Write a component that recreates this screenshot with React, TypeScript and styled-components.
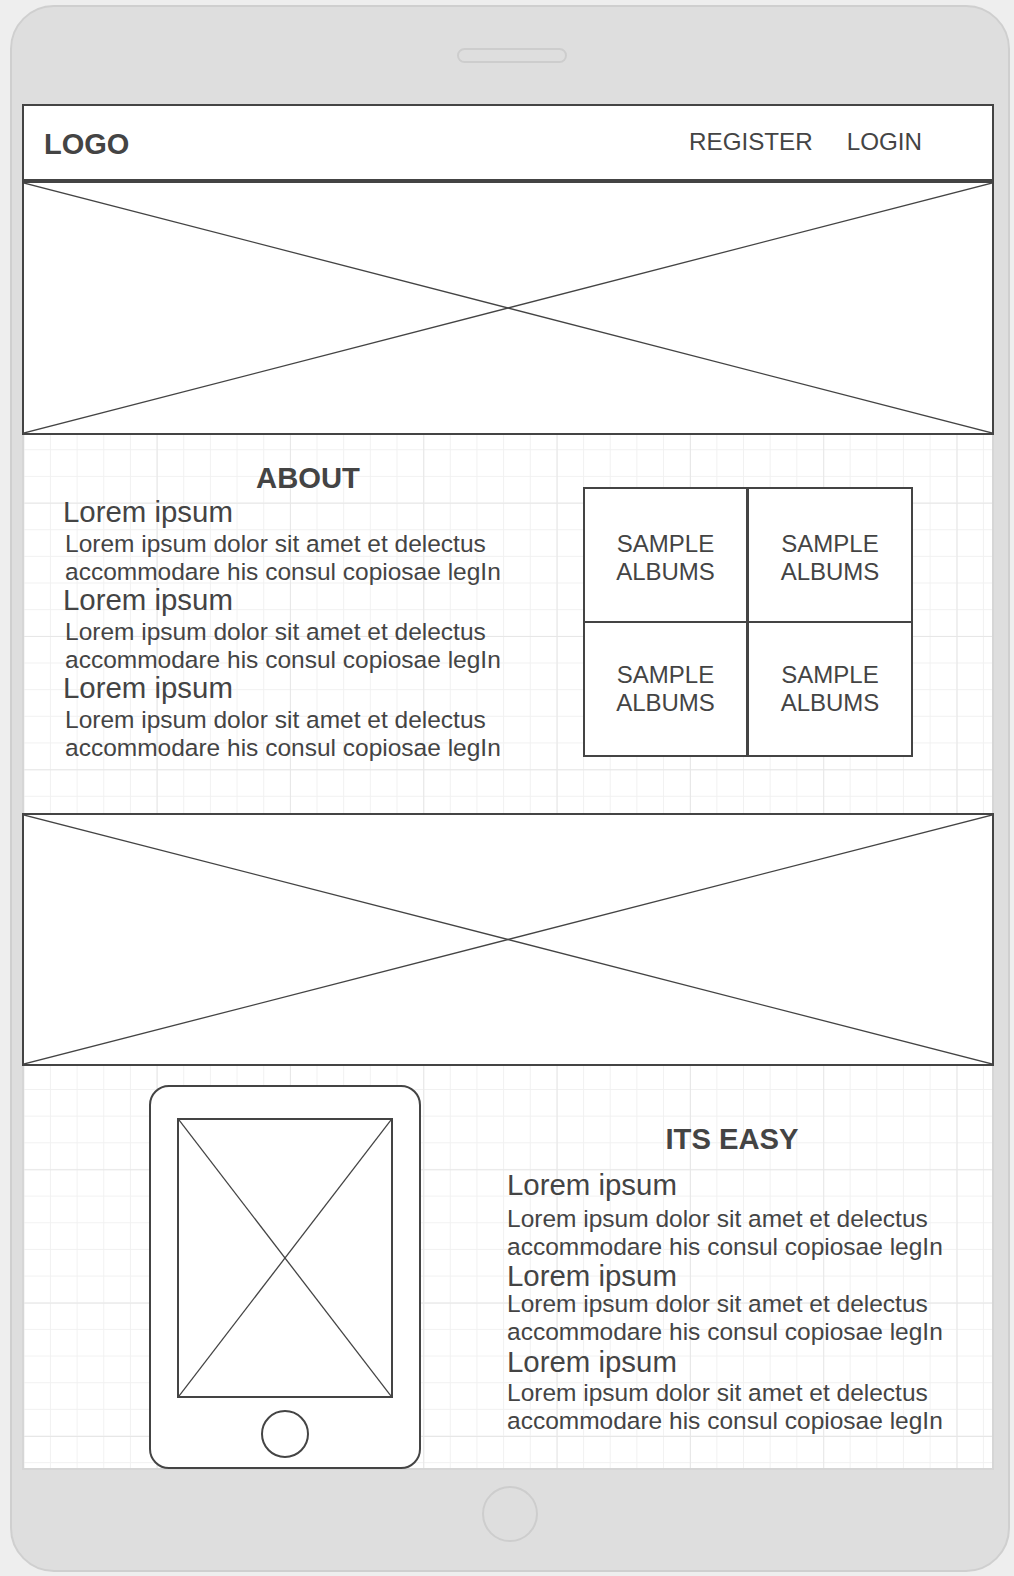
import styled, { createGlobalStyle } from 'styled-components';

const GlobalStyle = createGlobalStyle`
  html, body {
    margin: 0;
    padding: 0;
    background: #eeeeee;
  }

  body {
    font-family: "Liberation Sans", Arial, sans-serif;
    color: #444;
  }
`;

type Block = { gap: number };

const aboutBlocks: Block[] = [{ gap: 4 }, { gap: 4 }, { gap: 4 }];
const easyBlocks: Block[] = [{ gap: 6 }, { gap: 0 }, { gap: 3 }];

function Cross() {
  return (
    <CrossSvg viewBox="0 0 100 100" preserveAspectRatio="none">
      <line x1="0" y1="0" x2="100" y2="100" vectorEffect="non-scaling-stroke" />
      <line x1="0" y1="100" x2="100" y2="0" vectorEffect="non-scaling-stroke" />
    </CrossSvg>
  );
}

function TextBlocks({ blocks, indent, spacing }: { blocks: Block[]; indent: number; spacing: number }) {
  return (
    <>
      {blocks.map((block, i) => (
        <TextBlock key={i} $spacing={i === 0 ? 0 : spacing}>
          <BlockHeading>Lorem ipsum</BlockHeading>
          <BlockBody $gap={block.gap} $indent={indent}>
            Lorem ipsum dolor sit amet et delectus
            <br />
            accommodare his consul copiosae legIn
          </BlockBody>
        </TextBlock>
      ))}
    </>
  );
}

export default function App() {
  return (
    <>
      <GlobalStyle />
      <Device>
        <DeviceTop>
          <Speaker />
        </DeviceTop>
        <Screen>
          <NavBar>
            <Logo>LOGO</Logo>
            <NavLinks>
              <NavLink>REGISTER</NavLink>
              <NavLink>LOGIN</NavLink>
            </NavLinks>
          </NavBar>
          <Placeholder $height={254}>
            <Cross />
          </Placeholder>

          <AboutSection>
            <TextColumn>
              <SectionTitle $spacing={0}>ABOUT</SectionTitle>
              <TextBlocks blocks={aboutBlocks} indent={2} spacing={0} />
            </TextColumn>
            <AlbumGrid>
              {[0, 1, 2, 3].map((n) => (
                <AlbumCell key={n}>
                  SAMPLE
                  <br />
                  ALBUMS
                </AlbumCell>
              ))}
            </AlbumGrid>
          </AboutSection>

          <Placeholder $height={253}>
            <Cross />
          </Placeholder>

          <EasySection>
            <TabletFrame>
              <TabletScreen>
                <Cross />
              </TabletScreen>
              <TabletButton />
            </TabletFrame>
            <EasyColumn>
              <SectionTitle $spacing={12}>ITS EASY</SectionTitle>
              <TextBlocks blocks={easyBlocks} indent={0} spacing={1.5} />
            </EasyColumn>
          </EasySection>
        </Screen>
        <DeviceBottom>
          <HomeButton />
        </DeviceBottom>
      </Device>
    </>
  );
}

const Device = styled.div`
  width: 1000px;
  height: 1567px;
  margin: 5px 0 0 10px;
  box-sizing: border-box;
  display: flex;
  flex-direction: column;
  background-color: #dedede;
  border: 2px solid #cfcfcf;
  border-radius: 44px;
  overflow: hidden;
`;

const DeviceTop = styled.div`
  height: 97px;
  flex-shrink: 0;
  display: flex;
  justify-content: center;
  padding-top: 41px;
  padding-left: 4px;
  box-sizing: border-box;
`;

const Speaker = styled.div`
  width: 110px;
  height: 15px;
  box-sizing: border-box;
  border: 2px solid #cdcdcd;
  border-radius: 8px;
`;

const Screen = styled.div`
  width: 972px;
  height: 1366px;
  margin-left: 10px;
  flex-shrink: 0;
  display: flex;
  flex-direction: column;
  background-color: #fff;
  background-image:
    linear-gradient(to right, #e7e7e7 1px, transparent 1px),
    linear-gradient(to bottom, #e7e7e7 1px, transparent 1px),
    linear-gradient(to right, #f1f1f1 1px, transparent 1px),
    linear-gradient(to bottom, #f1f1f1 1px, transparent 1px);
  background-size:
    133.33px 133.33px,
    133.33px 133.33px,
    26.667px 26.667px,
    26.667px 26.667px;
  background-position: 1.3px -1.3px;
  box-shadow: inset 0 0 0 2px #d6d6d6;
`;

const NavBar = styled.div`
  height: 77px;
  flex-shrink: 0;
  box-sizing: border-box;
  display: flex;
  align-items: center;
  justify-content: space-between;
  padding: 2px 70px 0 20px;
  background-color: #fff;
  border: 2px solid #444;
`;

const Logo = styled.div`
  font-size: 29px;
  font-weight: bold;
  line-height: 34px;
`;

const NavLinks = styled.div`
  display: flex;
  gap: 34px;
  margin-top: -3px;
`;

const NavLink = styled.span`
  font-size: 24.2px;
  line-height: 28px;
`;

const Placeholder = styled.div<{ $height: number }>`
  height: ${(p) => p.$height}px;
  flex-shrink: 0;
  box-sizing: border-box;
  background-color: #fff;
  border: 2px solid #444;
`;

const CrossSvg = styled.svg`
  display: block;
  width: 100%;
  height: 100%;

  line {
    stroke: #444;
    stroke-width: 1.3;
  }
`;

const AboutSection = styled.div`
  height: 378px;
  flex-shrink: 0;
  box-sizing: border-box;
  display: flex;
  align-items: flex-start;
  gap: 30px;
  padding: 23px 0 0 41px;
`;

const TextColumn = styled.div`
  width: 490px;
  display: flex;
  flex-direction: column;
`;

const SectionTitle = styled.div<{ $spacing: number }>`
  font-size: 29.2px;
  font-weight: bold;
  line-height: 40px;
  text-align: center;
  margin-bottom: ${(p) => p.$spacing}px;
`;

const TextBlock = styled.div<{ $spacing: number }>`
  margin-top: ${(p) => p.$spacing}px;
`;

const BlockHeading = styled.div`
  font-size: 29.4px;
  line-height: 28px;
`;

const BlockBody = styled.div<{ $gap: number; $indent: number }>`
  font-size: 24.5px;
  line-height: 28px;
  margin-top: ${(p) => p.$gap}px;
  padding-left: ${(p) => p.$indent}px;
  white-space: nowrap;
`;

const AlbumGrid = styled.div`
  display: grid;
  grid-template-columns: 165px 165px;
  margin-top: 29px;
`;

const AlbumCell = styled.div`
  height: 136px;
  box-sizing: border-box;
  display: flex;
  align-items: center;
  justify-content: center;
  text-align: center;
  font-size: 24px;
  line-height: 28px;
  background-color: #fff;
  border: 2px solid #444;

  &:nth-child(-n + 2) {
    padding-top: 6px;
  }

  &:nth-child(even) {
    margin-left: -1px;
  }

  &:nth-child(n + 3) {
    margin-top: -2px;
  }
`;

const EasySection = styled.div`
  flex: 1;
  box-sizing: border-box;
  display: flex;
  align-items: flex-start;
  gap: 86px;
  padding: 19px 0 0 127px;
`;

const TabletFrame = styled.div`
  width: 272px;
  height: 384px;
  flex-shrink: 0;
  box-sizing: border-box;
  display: flex;
  flex-direction: column;
  align-items: center;
  padding-top: 31px;
  background-color: #fff;
  border: 2px solid #444;
  border-radius: 20px;
`;

const TabletScreen = styled.div`
  width: 216px;
  height: 280px;
  box-sizing: border-box;
  border: 2px solid #444;
`;

const TabletButton = styled.div`
  width: 48px;
  height: 48px;
  margin-top: 12px;
  box-sizing: border-box;
  border: 2px solid #444;
  border-radius: 50%;
`;

const EasyColumn = styled.div`
  width: 450px;
  display: flex;
  flex-direction: column;
  padding-top: 33.5px;
`;

const DeviceBottom = styled.div`
  flex: 1;
  display: flex;
  justify-content: center;
  padding-top: 16px;
  box-sizing: border-box;
`;

const HomeButton = styled.div`
  width: 56px;
  height: 56px;
  box-sizing: border-box;
  border: 2px solid #cdcdcd;
  border-radius: 50%;
`;
